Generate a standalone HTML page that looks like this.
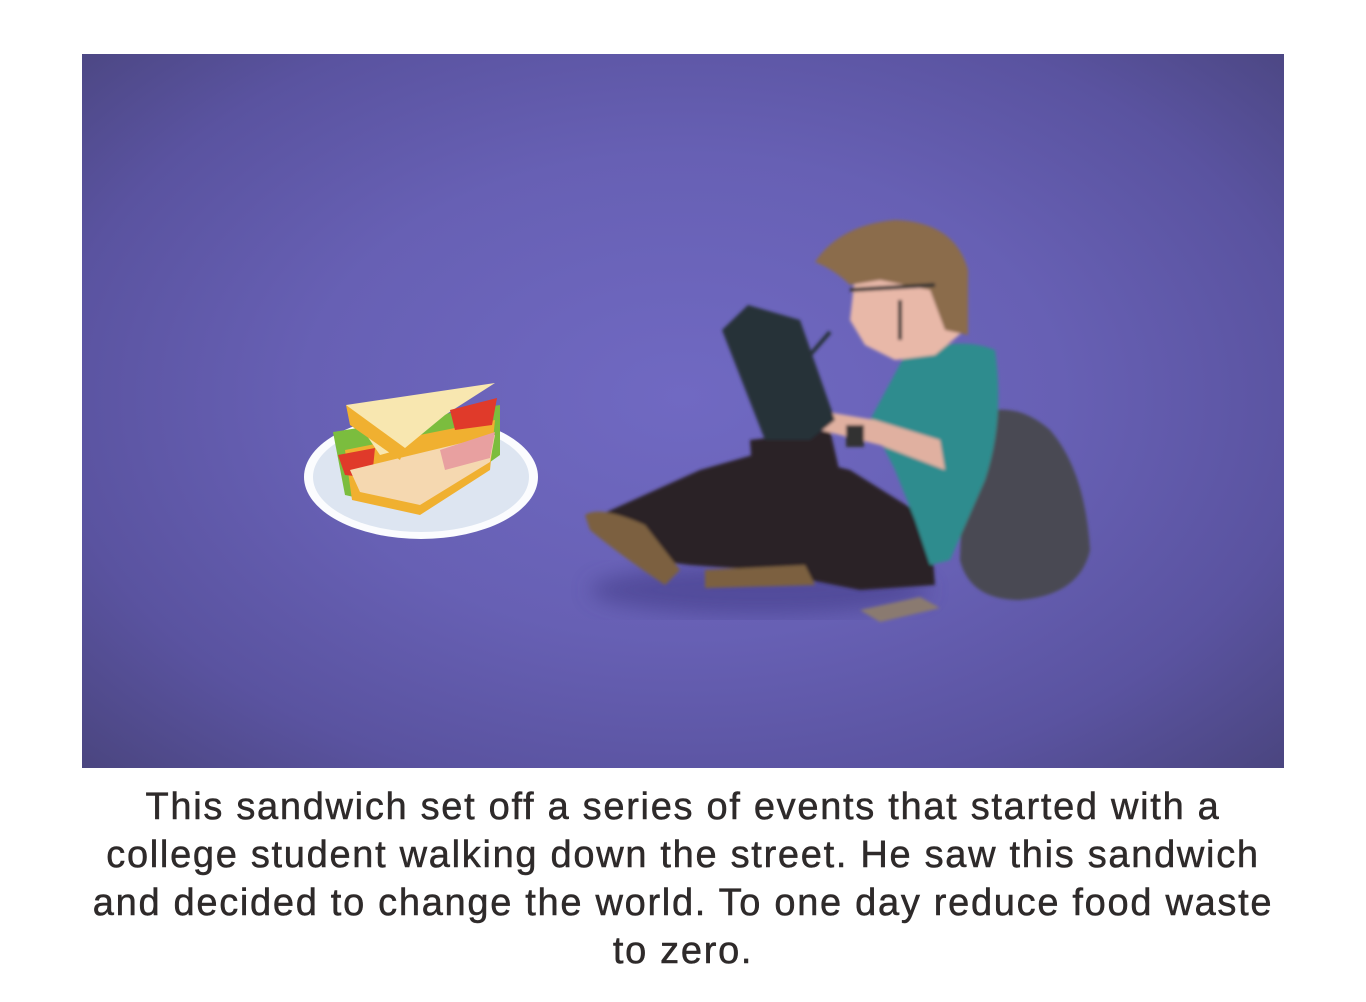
<!DOCTYPE html>
<html><head><meta charset="utf-8"><style>
html,body{margin:0;padding:0;background:#fff;width:1366px;height:1002px;overflow:hidden}
.pic{position:absolute;left:82px;top:54px;width:1202px;height:714px;background:radial-gradient(ellipse 70% 75% at 50% 48%,#7069c2 0%,#6760b4 45%,#5a53a0 75%,#4a457f 100%)}
.cap{position:absolute;left:0;top:783px;width:1366px;text-align:center;font-family:"Liberation Sans",sans-serif;font-size:38px;line-height:48px;color:#2e2a2a;letter-spacing:1.7px;-webkit-text-stroke:0.5px #2e2a2a}
.cap div{white-space:nowrap}
</style></head><body>
<div class="pic">
<svg width="1202" height="714" viewBox="82 54 1202 714" xmlns="http://www.w3.org/2000/svg">
<defs><filter id="b"><feGaussianBlur stdDeviation="1.5"/></filter><filter id="s"><feGaussianBlur stdDeviation="10"/></filter></defs>
<ellipse cx="421" cy="477" rx="117" ry="62" fill="#fbfcfe"/>
<ellipse cx="421" cy="477" rx="108" ry="55" fill="#dde5f1"/>
<polygon points="333,432 500,405 500,455 420,512 345,495" fill="#7bbd3e"/>
<polygon points="345,450 495,420 490,470 420,515 352,500" fill="#f0b030"/>
<polygon points="338,455 375,448 372,478 345,475" fill="#e03a2a"/>
<polygon points="350,470 495,435 490,462 420,505 360,492" fill="#f5d8b0"/>
<polygon points="440,450 495,432 490,458 445,470" fill="#e8a0a0"/>
<polygon points="346,405 495,383 445,415 405,448 380,455" fill="#f8e7b0"/>
<polygon points="346,405 405,448 400,460 350,425" fill="#f0b030"/>
<polygon points="450,410 497,398 492,425 455,430" fill="#e03a2a"/>
<ellipse cx="760" cy="590" rx="170" ry="25" fill="#4a4390" filter="url(#s)" opacity=".7"/>
<g filter="url(#b)">
<path d="M965,420 Q1010,395 1050,430 Q1085,470 1090,550 Q1080,595 1020,600 Q970,600 960,560 Z" fill="#4a4a52"/>
<path d="M600,515 L700,470 L770,450 L850,470 L930,520 L935,585 L860,590 L760,570 L690,565 L650,560 Z" fill="#2a2428"/>
<path d="M750,440 L830,430 L860,560 L810,580 L760,580 Z" fill="#2a2428"/>
<path d="M585,515 Q600,505 645,525 L680,570 L665,585 Q620,555 590,530 Z" fill="#7b6040"/>
<path d="M705,570 L805,565 L815,585 L705,588 Z" fill="#7b6040"/>
<path d="M905,355 Q960,335 995,350 Q1005,420 985,480 L950,560 L930,565 L915,520 L895,470 L870,420 Z" fill="#2f8c8e"/>
<path d="M815,410 L875,420 L940,440 L945,470 L880,445 L820,430 Z" fill="#e0b0a0"/>
<rect x="846" y="425" width="18" height="22" fill="#333"/>
<path d="M855,275 L960,270 L965,330 L935,355 L895,360 L865,345 L850,320 Z" fill="#e8b8a8"/>
<path d="M815,262 Q840,225 895,220 Q955,222 968,270 L968,335 L945,330 L930,290 L880,280 L850,285 Q835,270 815,262 Z" fill="#8b6c4c"/>
<path d="M850,290 L935,285 M900,300 L900,340" stroke="#333" stroke-width="4"/>
<path d="M722,330 L748,305 L800,320 L835,420 L810,440 L765,440 Z" fill="#253039"/>
<line x1="810" y1="355" x2="830" y2="332" stroke="#253039" stroke-width="4"/>
<polygon points="860,610 920,597 940,608 880,622" fill="#8a7a70"/>
</g>
</svg>
</div>
<div class="cap">
<div>This sandwich set off a series of events that started with a</div>
<div>college student walking down the street. He saw this sandwich</div>
<div>and decided to change the world. To one day reduce food waste</div>
<div>to zero.</div>
</div>
</body></html>
